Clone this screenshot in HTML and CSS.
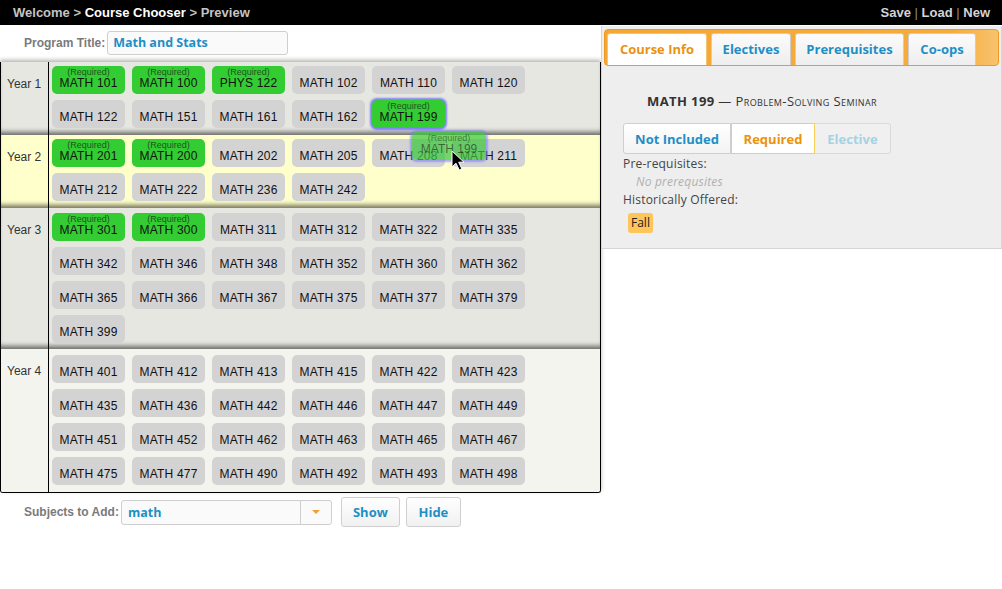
FILE: index.html
```html
<!DOCTYPE html>
<html>
<head>
<meta charset="utf-8">
<title>Course Chooser</title>
<link rel="stylesheet" href="styles.css">
</head>
<body>
<div class="topbar">
  <div class="crumbs"><span class="dim">Welcome</span> &gt; <span class="cur">Course Chooser</span> &gt; <span class="dim">Preview</span></div>
  <div class="actions">Save <span class="sep">|</span> Load <span class="sep">|</span> New</div>
</div>
<div class="main">
  <div class="left">
    <div class="title-row">
      <span class="field-label">Program Title:</span>
      <div class="text-input">Math and Stats</div>
    </div>
    <div class="grid">
      <div class="year y1">
        <div class="ylabel">Year 1</div>
        <div class="courses">
          <div class="chip req"><span class="tag">(Required)</span><span>MATH 101</span></div>
          <div class="chip req"><span class="tag">(Required)</span><span>MATH 100</span></div>
          <div class="chip req"><span class="tag">(Required)</span><span>PHYS 122</span></div>
          <div class="chip">MATH 102</div>
          <div class="chip">MATH 110</div>
          <div class="chip">MATH 120</div>
          <div class="chip">MATH 122</div>
          <div class="chip">MATH 151</div>
          <div class="chip">MATH 161</div>
          <div class="chip">MATH 162</div>
          <div class="chip req selected"><span class="tag">(Required)</span><span>MATH 199</span></div>
        </div>
      </div>
      <div class="year y2">
        <div class="ylabel">Year 2</div>
        <div class="courses">
          <div class="chip req"><span class="tag">(Required)</span><span>MATH 201</span></div>
          <div class="chip req"><span class="tag">(Required)</span><span>MATH 200</span></div>
          <div class="chip">MATH 202</div>
          <div class="chip">MATH 205</div>
          <div class="chip">MATH 208</div>
          <div class="chip">MATH 211</div>
          <div class="chip">MATH 212</div>
          <div class="chip">MATH 222</div>
          <div class="chip">MATH 236</div>
          <div class="chip">MATH 242</div>
        </div>
      </div>
      <div class="year y3">
        <div class="ylabel">Year 3</div>
        <div class="courses">
          <div class="chip req"><span class="tag">(Required)</span><span>MATH 301</span></div>
          <div class="chip req"><span class="tag">(Required)</span><span>MATH 300</span></div>
          <div class="chip">MATH 311</div>
          <div class="chip">MATH 312</div>
          <div class="chip">MATH 322</div>
          <div class="chip">MATH 335</div>
          <div class="chip">MATH 342</div>
          <div class="chip">MATH 346</div>
          <div class="chip">MATH 348</div>
          <div class="chip">MATH 352</div>
          <div class="chip">MATH 360</div>
          <div class="chip">MATH 362</div>
          <div class="chip">MATH 365</div>
          <div class="chip">MATH 366</div>
          <div class="chip">MATH 367</div>
          <div class="chip">MATH 375</div>
          <div class="chip">MATH 377</div>
          <div class="chip">MATH 379</div>
          <div class="chip">MATH 399</div>
        </div>
      </div>
      <div class="year y4">
        <div class="ylabel">Year 4</div>
        <div class="courses">
          <div class="chip">MATH 401</div>
          <div class="chip">MATH 412</div>
          <div class="chip">MATH 413</div>
          <div class="chip">MATH 415</div>
          <div class="chip">MATH 422</div>
          <div class="chip">MATH 423</div>
          <div class="chip">MATH 435</div>
          <div class="chip">MATH 436</div>
          <div class="chip">MATH 442</div>
          <div class="chip">MATH 446</div>
          <div class="chip">MATH 447</div>
          <div class="chip">MATH 449</div>
          <div class="chip">MATH 451</div>
          <div class="chip">MATH 452</div>
          <div class="chip">MATH 462</div>
          <div class="chip">MATH 463</div>
          <div class="chip">MATH 465</div>
          <div class="chip">MATH 467</div>
          <div class="chip">MATH 475</div>
          <div class="chip">MATH 477</div>
          <div class="chip">MATH 490</div>
          <div class="chip">MATH 492</div>
          <div class="chip">MATH 493</div>
          <div class="chip">MATH 498</div>
        </div>
      </div>
    </div>
    <div class="add-row">
      <span class="field-label">Subjects to Add:</span>
      <div class="select">
        <span class="select-value">math</span>
        <span class="select-arrow"><span class="caret"></span></span>
      </div>
      <button class="btn btn-show">Show</button>
      <button class="btn btn-hide">Hide</button>
    </div>
  </div>
  <div class="panel">
    <div class="tabbar">
      <div class="tab active tab-info">Course Info</div>
      <div class="tab tab-elect">Electives</div>
      <div class="tab tab-prereq">Prerequisites</div>
      <div class="tab tab-coops">Co-ops</div>
    </div>
    <div class="panel-body">
      <div class="course-title"><b>MATH 199</b> — <span class="sc">Problem-Solving Seminar</span></div>
      <div class="seg">
        <div class="seg-btn seg-none">Not Included</div>
        <div class="seg-btn seg-req">Required</div>
        <div class="seg-btn seg-elec">Elective</div>
      </div>
      <div class="info-line">Pre-requisites:</div>
      <div class="info-line muted">No prerequsites</div>
      <div class="info-line">Historically Offered:</div>
      <div class="terms"><span class="term">Fall</span></div>
    </div>
  </div>
</div>
<div class="ghost"><span class="tag">(Required)</span><span>MATH 199</span></div>
<svg class="cursor" width="18" height="22" viewBox="0 0 18 22">
  <path d="M1 1 L1 17 L5 13.2 L8.2 20 L10.8 18.8 L7.7 12.2 L13 12.2 Z" fill="#000" stroke="#fff" stroke-width="1" stroke-linejoin="round"/>
</svg>
</body>
</html>
```
FILE: styles.css
```css
body {
  margin: 0;
  width: 1002px;
  height: 589px;
  background: #fff;
  font-family: "Liberation Sans", Arial, sans-serif;
  position: relative;
  overflow: hidden;
}

.topbar {
  height: 25px;
  background: #000;
  display: flex;
  justify-content: space-between;
  align-items: center;
  padding: 0 12px 0 13px;
  font-weight: bold;
  font-size: 13px;
  color: #bdbdbd;
}
.topbar .cur { color: #fff; }
.topbar .dim { color: #c4c4c4; }
.actions { color: #d4d4d4; }
.actions .sep { color: #8a8a8a; font-weight: normal; }

.main {
  display: flex;
  align-items: flex-start;
}

.left {
  width: 601px;
}

.title-row {
  display: flex;
  align-items: center;
  gap: 2px;
  padding: 6px 0 0 24px;
}
.field-label {
  font-size: 12px;
  font-weight: bold;
  color: #7a7a7a;
}
.text-input {
  box-sizing: border-box;
  width: 181px;
  height: 24px;
  border: 1px solid #cfcfcf;
  border-radius: 3px;
  background: #fafafa;
  padding: 0 5px;
  line-height: 22px;
  font-family: "Open Sans", sans-serif;
  font-weight: 700;
  font-size: 12.5px;
  color: #1e8fc6;
}

.grid {
  margin-top: 7px;
  box-sizing: border-box;
  width: 601px;
  border: 1px solid #000;
  border-top: none;
  border-radius: 0 0 3px 3px;
  box-shadow: 0 -2px 4px rgba(0, 0, 0, 0.3);
  overflow: hidden;
}

.year {
  display: flex;
  box-shadow: inset 0 -6px 5px -3px rgba(0, 0, 0, 0.55);
}
.y1, .y3 { background: #e7e7e1; }
.y2 { background: #ffffcc; }
.y4 { background: #f4f4ef; box-shadow: none; }

.ylabel {
  box-sizing: border-box;
  width: 48px;
  flex: none;
  border-right: 1px solid #000;
  padding: 15px 0 0 6px;
  font-size: 12px;
  line-height: 14px;
  color: #333;
}

.courses {
  flex: 1;
  display: flex;
  flex-wrap: wrap;
  align-content: flex-start;
  gap: 6px 7px;
  padding: 4px 0 7px 3px;
}
.y2 .courses { padding-top: 4px; padding-bottom: 7px; }
.y3 .courses { padding-top: 5px; padding-bottom: 6px; }
.y4 .courses { padding: 6px 0 7px 3px; }

.chip {
  box-sizing: border-box;
  width: 73px;
  height: 28px;
  border-radius: 5px;
  background: #d3d3d3;
  display: flex;
  flex-direction: column;
  align-items: center;
  justify-content: flex-end;
  padding-bottom: 4px;
  font-size: 12px;
  line-height: 13px;
  color: #111;
  letter-spacing: 0.2px;
}
.chip.req {
  background: #33cc33;
}
.tag {
  font-size: 9px;
  line-height: 9px;
  letter-spacing: 0;
  color: #1d551d;
}
.chip.selected {
  box-shadow: 0 0 2px 2px rgba(110, 110, 255, 0.85);
}

.add-row {
  display: flex;
  align-items: center;
  height: 30px;
  margin-top: 4px;
  padding-left: 24px;
}
.select {
  margin-left: 2px;
  box-sizing: border-box;
  width: 211px;
  height: 25px;
  border: 1px solid #cfcfcf;
  border-radius: 3px;
  background: #fafafa;
  display: flex;
}
.select-value {
  flex: 1;
  padding-left: 6px;
  line-height: 23px;
  font-family: "Open Sans", sans-serif;
  font-weight: 700;
  font-size: 12.5px;
  color: #1e8fc6;
}
.select-arrow {
  width: 30px;
  border-left: 1px solid #cfcfcf;
  display: flex;
  align-items: center;
  justify-content: center;
}
.caret {
  width: 0;
  height: 0;
  border-left: 4px solid transparent;
  border-right: 4px solid transparent;
  border-top: 4px solid #f0a030;
}
.btn {
  box-sizing: border-box;
  height: 30px;
  border: 1px solid #cfcfcf;
  border-radius: 3px;
  background: linear-gradient(#ffffff, #f1f1f1);
  font-family: "Open Sans", sans-serif;
  font-weight: 700;
  font-size: 13px;
  color: #1e8fc6;
  padding: 0;
}
.btn-show { width: 59px; margin-left: 9px; }
.btn-hide { width: 55px; margin-left: 6px; }

.panel {
  box-sizing: border-box;
  width: 401px;
  margin-top: 1px;
  background: #eeeeee;
  border: 1px solid #d6d6d6;
  border-top: none;
  padding: 3px 2px 15px 2px;
  font-family: "Open Sans", sans-serif;
}
.tabbar {
  box-sizing: border-box;
  height: 37px;
  border: 1px solid #ee9a22;
  border-radius: 4px;
  background: linear-gradient(to right, #f5a733 0%, #f6ac3c 88%, #f8c26d 100%);
  display: flex;
  align-items: flex-end;
  gap: 4px;
  padding-left: 2px;
}
.tab {
  box-sizing: border-box;
  height: 32px;
  border: 1px solid #cdcdcd;
  border-bottom: none;
  border-radius: 3px 3px 0 0;
  background: linear-gradient(#fbfbfb, #eeeeee);
  display: flex;
  align-items: center;
  justify-content: center;
  padding-bottom: 2px;
  font-weight: 700;
  font-size: 13px;
  color: #1e8fc6;
}
.tab.active {
  background: #fff;
  color: #ec920f;
  border-color: #f3c56e;
}
.tab-info { width: 100px; }
.tab-elect { width: 80px; }
.tab-prereq { width: 109px; }
.tab-coops { width: 68px; }

.panel-body {
  padding: 0 0 0 19px;
}
.course-title {
  margin: 27px 0 0 24px;
  font-size: 13px;
  line-height: 17px;
  letter-spacing: 0.4px;
  color: #333;
}
.course-title b { font-weight: 700; }
.sc { font-variant: small-caps; }

.seg {
  margin-top: 13px;
  margin-bottom: 1px;
  display: flex;
  width: max-content;
}
.seg-btn {
  box-sizing: border-box;
  height: 31px;
  display: flex;
  align-items: center;
  justify-content: center;
  font-weight: 700;
  font-size: 13px;
}
.seg-none {
  width: 108px;
  border: 1px solid #cfcfcf;
  border-radius: 3px 0 0 3px;
  background: linear-gradient(#ffffff, #f3f3f3);
  color: #1e8fc6;
}
.seg-req {
  width: 84px;
  border: 1px solid #f6cf55;
  background: #fff;
  color: #ec920f;
}
.seg-elec {
  width: 76px;
  border: 1px solid #dadada;
  border-left: none;
  border-radius: 0 3px 3px 0;
  background: #f0f0f0;
  color: #a6d2e4;
}

.info-line {
  font-size: 12px;
  line-height: 18px;
  letter-spacing: 0.2px;
  color: #444;
}
.info-line.muted {
  padding-left: 13px;
  font-style: italic;
  color: #b0b0b0;
}
.terms {
  margin-top: 1px;
  padding-left: 5px;
}
.term {
  display: inline-block;
  height: 20px;
  line-height: 20px;
  padding: 0 3px;
  border-radius: 3px;
  background: #fdc55a;
  font-size: 12px;
  color: #222;
}

.ghost {
  position: absolute;
  left: 412px;
  top: 132px;
  width: 74px;
  height: 28px;
  box-sizing: border-box;
  padding-bottom: 4px;
  border-radius: 5px;
  background: rgba(60, 200, 60, 0.72);
  box-shadow: 0 0 2px 2px rgba(120, 120, 255, 0.6);
  display: flex;
  flex-direction: column;
  align-items: center;
  justify-content: flex-end;
  font-size: 12px;
  line-height: 13px;
  color: rgba(30, 30, 30, 0.6);
}
.ghost .tag { color: rgba(30, 60, 30, 0.6); }

.cursor {
  position: absolute;
  left: 451px;
  top: 150px;
}
```
